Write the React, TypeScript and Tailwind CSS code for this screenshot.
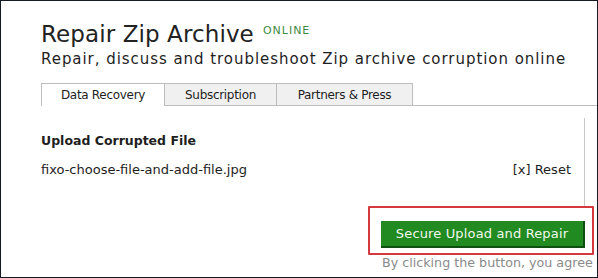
import React from 'react';

type Tab = { label: string; width: string; active?: boolean };

const tabs: Tab[] = [
  { label: 'Data Recovery', width: 'w-[124px] border-l', active: true },
  { label: 'Subscription', width: 'w-[112px]' },
  { label: 'Partners & Press', width: 'w-[136px]' },
];

export default function App() {
  return (
    <div
      className="relative w-[598px] h-[278px] overflow-hidden border border-[#161a22] bg-white text-[#1e1e1e]"
      style={{ fontFamily: '"DejaVu Sans", Verdana, sans-serif' }}
    >
      <div className="pl-[40px] pt-[19px]">
        {/* heading */}
        <div className="flex items-start">
          <h1 className="text-[23px] leading-[28px] font-normal tracking-[0.1px] text-[#222]">Repair Zip Archive</h1>
          <span className="ml-[9px] mt-[4px] text-[11px] leading-[14px] tracking-[1px] text-[#3f8a3f]">ONLINE</span>
        </div>
        <p className="mt-[1px] text-[15px] leading-[20px] tracking-[0.95px] whitespace-nowrap">
          Repair, discuss and troubleshoot Zip archive corruption online
        </p>

        {/* tabs */}
        <div className="mt-[14px] flex">
          {tabs.map((t) => (
            <div
              key={t.label}
              className={
                t.active
                  ? `${t.width} h-[23px] border-t border-r border-[#bdbdbd] bg-white flex items-center justify-center text-[12px] tracking-[-0.3px]`
                  : `${t.width} h-[23px] border-t border-r border-b border-[#bdbdbd] bg-[#f0f0f0] flex items-center justify-center text-[12px] tracking-[-0.3px]`
              }
            >
              {t.label}
            </div>
          ))}
          <div className="flex-1 h-[23px] border-b border-[#bdbdbd]" />
        </div>

        {/* upload panel */}
        <div className="mt-[12px] mr-[12px] h-[88px] border-r border-[#c8c8c8] pt-[15px] pr-[13px]">
          <div className="text-[12.5px] leading-[16px] font-bold">Upload Corrupted File</div>
          <div className="mt-[12px] flex justify-between text-[13px] leading-[18px]">
            <span>fixo-choose-file-and-add-file.jpg</span>
            <span>[x] Reset</span>
          </div>
        </div>
      </div>

      {/* submit */}
      <div className="ml-[380px] mt-[15px]">
        <button className="w-[204px] h-[27px] bg-[#218a21] border-r-2 border-b-2 border-[#0f4f12] text-[13px] tracking-[0.15px] text-[#f2f8ec]">
          Secure Upload and Repair
        </button>
        <div className="mt-[6px] ml-[1px] whitespace-nowrap text-[12.7px] leading-[18px] text-[#8a8a8a]">
          By clicking the button, you agree
        </div>
      </div>

      {/* annotation highlight */}
      <div className="absolute left-[367px] top-[205px] w-[226px] h-[49px] border-2 border-[#d6393d] rounded-[1px]" />
    </div>
  );
}
